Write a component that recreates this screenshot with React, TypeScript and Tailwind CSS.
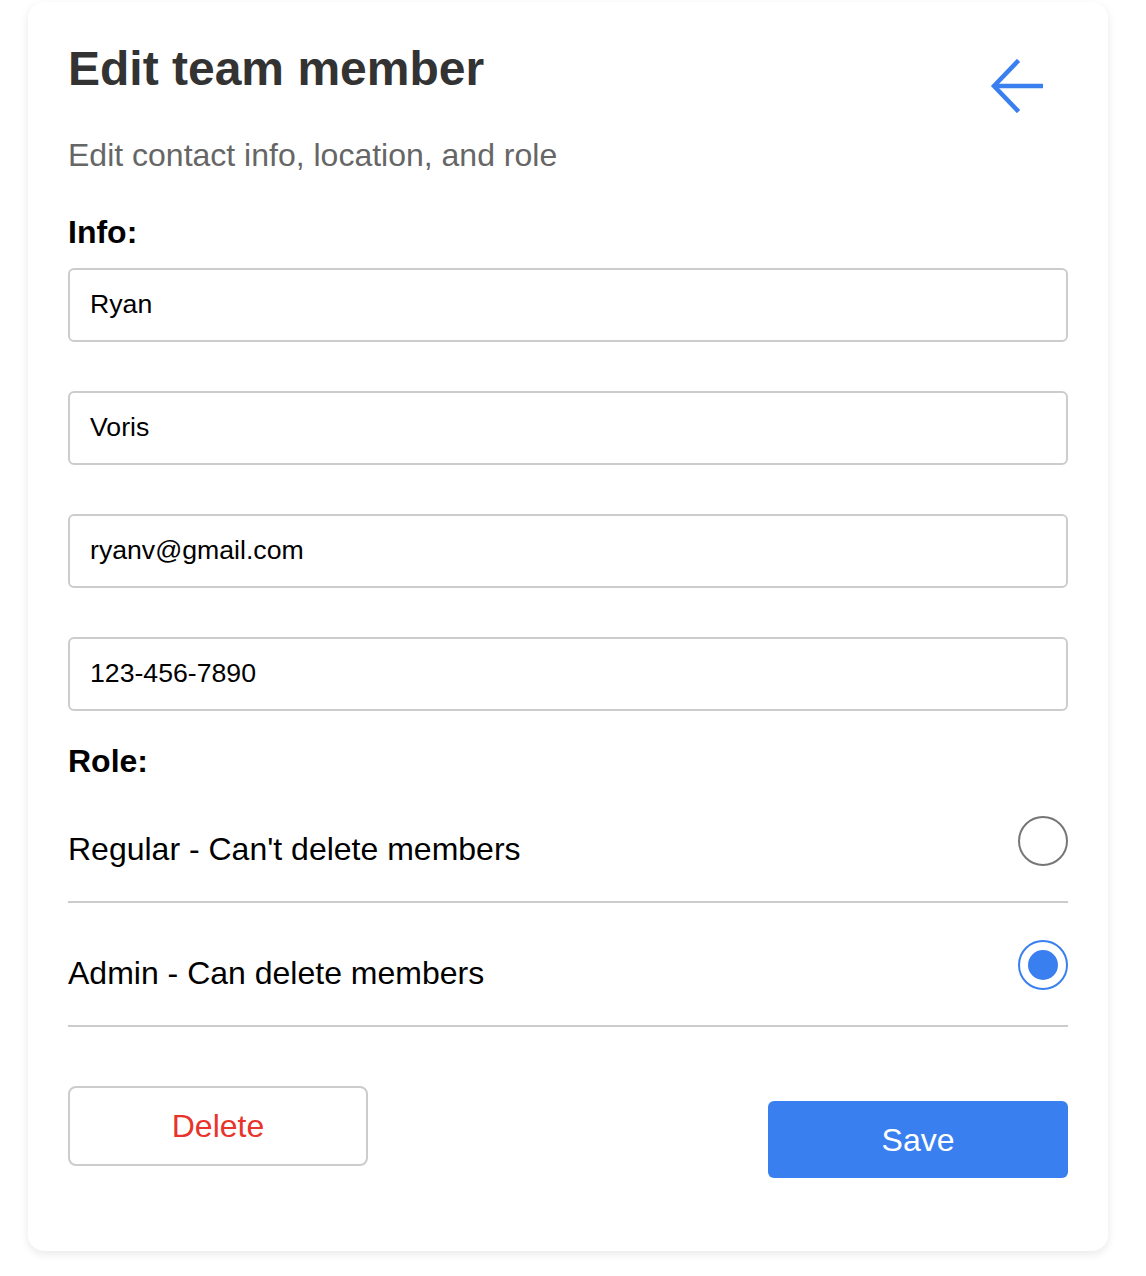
import React from "react";

const font = { fontFamily: '"Liberation Sans", Arial, Helvetica, sans-serif' };

function Input({ value }: { value: string }) {
  return (
    <div className="h-[74px] w-full rounded-[6px] border-2 border-[#cccccc] pl-[20px] flex items-center text-[26.67px] leading-[1.15] text-black">
      {value}
    </div>
  );
}

function Radio({ checked }: { checked: boolean }) {
  return checked ? (
    <div className="mb-[16px] w-[50px] h-[50px] rounded-full border-2 border-[#3a7ff0] flex items-center justify-center shrink-0">
      <div className="w-[30px] h-[30px] rounded-full bg-[#3a7ff0]" />
    </div>
  ) : (
    <div className="mb-[16px] w-[50px] h-[50px] rounded-full border-2 border-[#767676] shrink-0" />
  );
}

function RoleRow({ label, checked }: { label: string; checked: boolean }) {
  return (
    <div className="h-[124px] box-border border-b-2 border-[#cccccc] pt-[18px] flex items-center justify-between">
      <span className="text-[32px] leading-[1.15] text-black">{label}</span>
      <Radio checked={checked} />
    </div>
  );
}

export default function App() {
  return (
    <div className="min-h-[1276px] bg-white" style={font}>
      <div className="ml-[28px] mt-[2px] w-[1080px] rounded-2xl bg-white shadow-[0_3px_10px_rgba(0,0,0,0.09)] px-[40px] pt-[39px] pb-[73px]">
        <div className="flex items-start justify-between">
          <h1 className="text-[48px] leading-[1.15] font-bold text-[#333333]">Edit team member</h1>
          <svg
            width="56"
            height="54"
            viewBox="0 0 56 54"
            className="mt-[18px] mr-[22px]"
            fill="none"
            stroke="#3a7ff0"
            strokeWidth="4.5"
          >
            <path d="M27 3 L4 27 L27 51" strokeLinecap="square" strokeLinejoin="miter" />
            <path d="M4 27 H53" />
          </svg>
        </div>
        <p className="mt-[24px] text-[32px] leading-[1.15] text-[#666666]">Edit contact info, location, and role</p>
        <h2 className="mt-[40px] text-[32px] leading-[1.15] font-bold text-black">Info:</h2>
        <div className="mt-[17px] flex flex-col gap-[49px]">
          <Input value="Ryan" />
          <Input value="Voris" />
          <Input value="ryanv@gmail.com" />
          <Input value="123-456-7890" />
        </div>
        <h2 className="mt-[32px] text-[32px] leading-[1.15] font-bold text-black">Role:</h2>
        <RoleRow label="Regular - Can't delete members" checked={false} />
        <RoleRow label="Admin - Can delete members" checked={true} />
        <div className="mt-[59px] flex items-start justify-between">
          <button className="w-[300px] h-[80px] rounded-[8px] border-2 border-[#cccccc] bg-white text-[32px] text-[#e8342a]">
            Delete
          </button>
          <button className="mt-[15px] w-[300px] h-[77px] rounded-[6px] bg-[#3a7ff0] text-[32px] text-white">
            Save
          </button>
        </div>
      </div>
    </div>
  );
}
